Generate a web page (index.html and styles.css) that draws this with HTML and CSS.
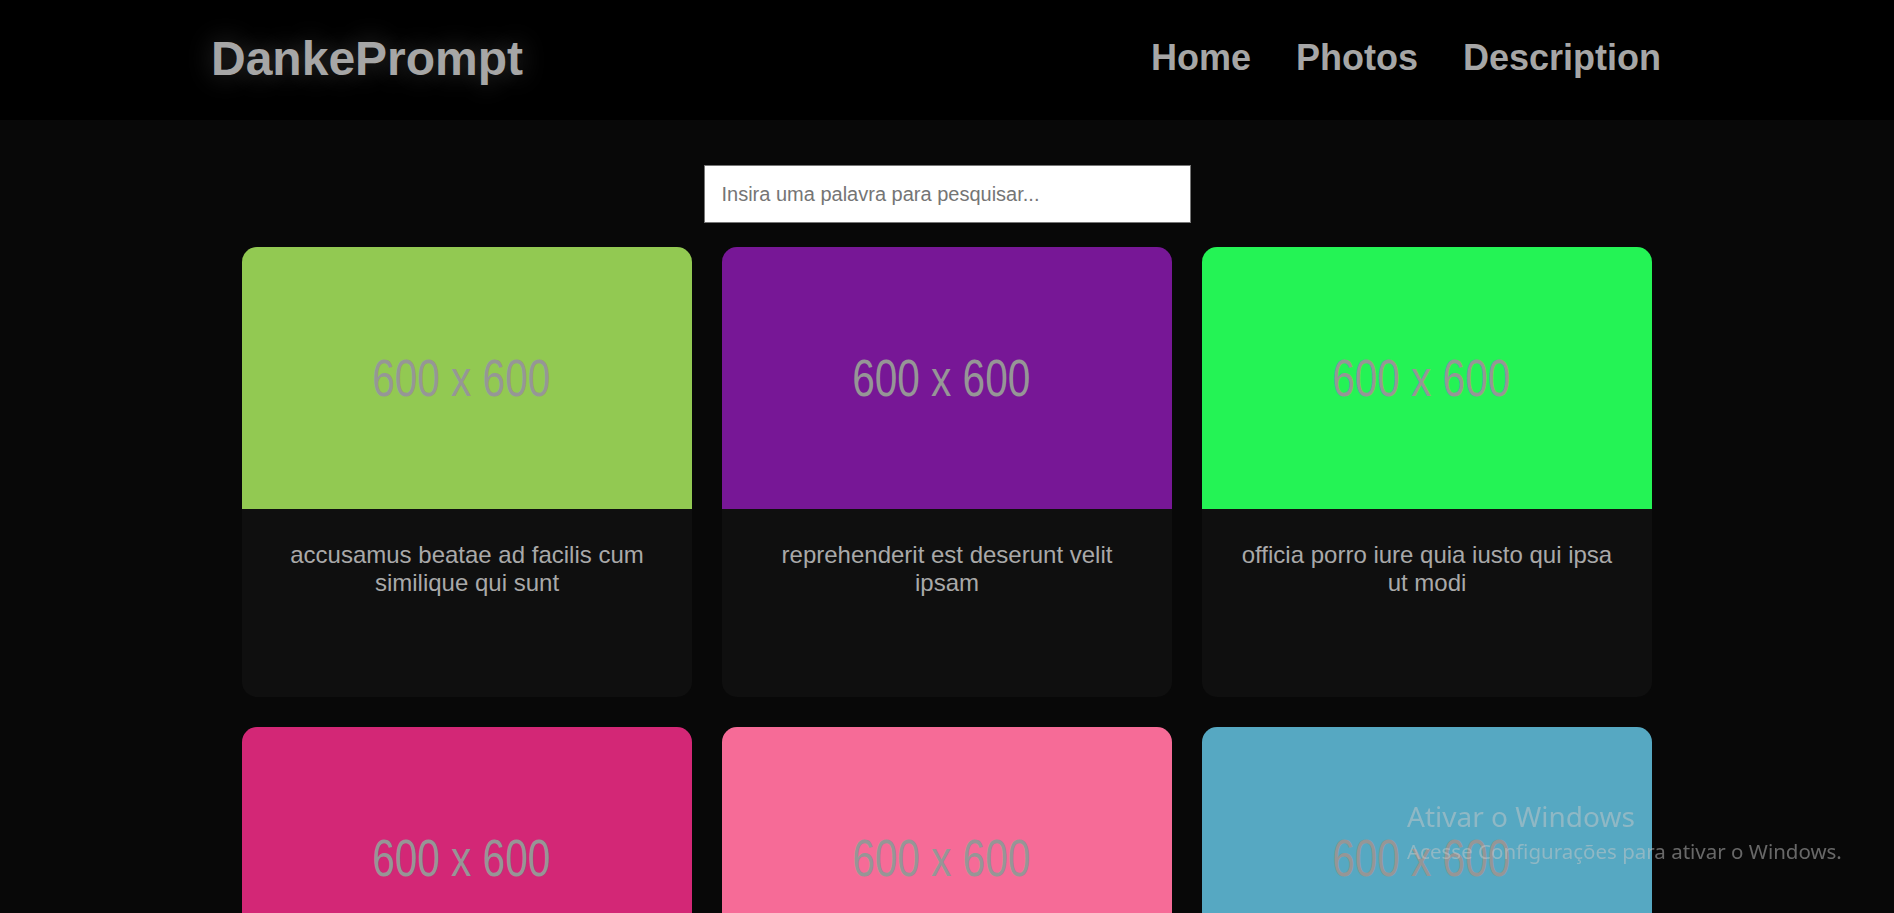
FILE: index.html
```html
<!DOCTYPE html>
<html lang="pt">
<head>
<meta charset="utf-8">
<title>DankePrompt</title>
<link rel="stylesheet" href="styles.css">
</head>
<body>
<header class="topbar">
  <h1 class="logo">DankePrompt</h1>
  <nav class="nav">
    <a href="#" class="nav-link">Home</a>
    <a href="#" class="nav-link">Photos</a>
    <a href="#" class="nav-link">Description</a>
  </nav>
</header>
<main class="content">
  <div class="search-wrap">
    <input class="search" type="text" placeholder="Insira uma palavra para pesquisar...">
  </div>
  <section class="grid">
    <article class="card">
      <div class="thumb" style="background-color:#92c952"><span class="thumb-label">600 x 600</span></div>
      <p class="card-title">accusamus beatae ad facilis cum similique qui sunt</p>
    </article>
    <article class="card">
      <div class="thumb" style="background-color:#771796"><span class="thumb-label">600 x 600</span></div>
      <p class="card-title">reprehenderit est deserunt velit ipsam</p>
    </article>
    <article class="card">
      <div class="thumb" style="background-color:#24f355"><span class="thumb-label">600 x 600</span></div>
      <p class="card-title">officia porro iure quia iusto qui ipsa ut modi</p>
    </article>
    <article class="card">
      <div class="thumb" style="background-color:#d32776"><span class="thumb-label">600 x 600</span></div>
      <p class="card-title">culpa odio esse rerum omnis laboriosam voluptate repudiandae</p>
    </article>
    <article class="card">
      <div class="thumb" style="background-color:#f66b97"><span class="thumb-label">600 x 600</span></div>
      <p class="card-title">natus nisi omnis corporis facere molestiae rerum in</p>
    </article>
    <article class="card">
      <div class="thumb" style="background-color:#56a8c2"><span class="thumb-label">600 x 600</span></div>
      <p class="card-title">accusamus ea aliquid et amet sequi nemo</p>
    </article>
  </section>
</main>
<div class="watermark">
  <div class="wm-title">Ativar o Windows</div>
  <div class="wm-sub">Acesse Configurações para ativar o Windows.</div>
</div>
</body>
</html>
```
FILE: styles.css
```css
html, body {
  margin: 0;
  padding: 0;
}
body {
  background: #080808;
  font-family: "Liberation Sans", Arial, sans-serif;
  color: #a9a9a9;
  overflow: hidden;
}
.topbar {
  height: 120px;
  background: #000;
  display: flex;
  align-items: center;
  justify-content: space-between;
  padding: 0 233px 0 211px;
  box-sizing: border-box;
}
.logo {
  margin: 0;
  font-size: 48px;
  font-weight: bold;
  color: #a6a6a6;
  text-shadow: 0 0 26px rgba(255, 255, 255, 0.22);
  position: relative;
  top: -2px;
}
.nav {
  display: flex;
  gap: 45px;
}
.nav-link {
  font-size: 36px;
  font-weight: bold;
  color: #a6a6a6;
  text-decoration: none;
  position: relative;
  top: -2px;
}
.content {
  padding-top: 45px;
}
.search-wrap {
  display: flex;
  justify-content: center;
}
.search {
  width: 487px;
  height: 58px;
  box-sizing: border-box;
  border: 1px solid #767676;
  background: #fff;
  padding: 0 17px;
  font-family: "Liberation Sans", Arial, sans-serif;
  font-size: 20px;
  outline: none;
}
.search::placeholder {
  color: #757575;
}
.grid {
  display: grid;
  grid-template-columns: repeat(3, 450px);
  gap: 30px;
  justify-content: center;
  margin-top: 24px;
}
.card {
  height: 450px;
  background: #0f0f0f;
  border-radius: 15px;
  overflow: hidden;
}
.thumb {
  height: 262px;
  display: flex;
  align-items: center;
  justify-content: center;
  padding-right: 12px;
}
.thumb-label {
  font-family: "Liberation Sans", Arial, sans-serif;
  font-size: 52px;
  color: #969696;
  transform: scaleX(0.78);
  white-space: nowrap;
}
.card-title {
  margin: 0;
  padding: 32px 30px;
  font-size: 24px;
  text-align: center;
  color: #a9a9a9;
}
.watermark {
  position: fixed;
  left: 1407px;
  top: 799px;
  font-family: "Noto Sans", "Open Sans", sans-serif;
  color: rgba(200, 200, 200, 0.5);
  pointer-events: none;
}
.wm-title {
  font-size: 28px;
  line-height: 34px;
}
.wm-sub {
  font-size: 20.5px;
  line-height: 26px;
  margin-top: 5px;
}
```
